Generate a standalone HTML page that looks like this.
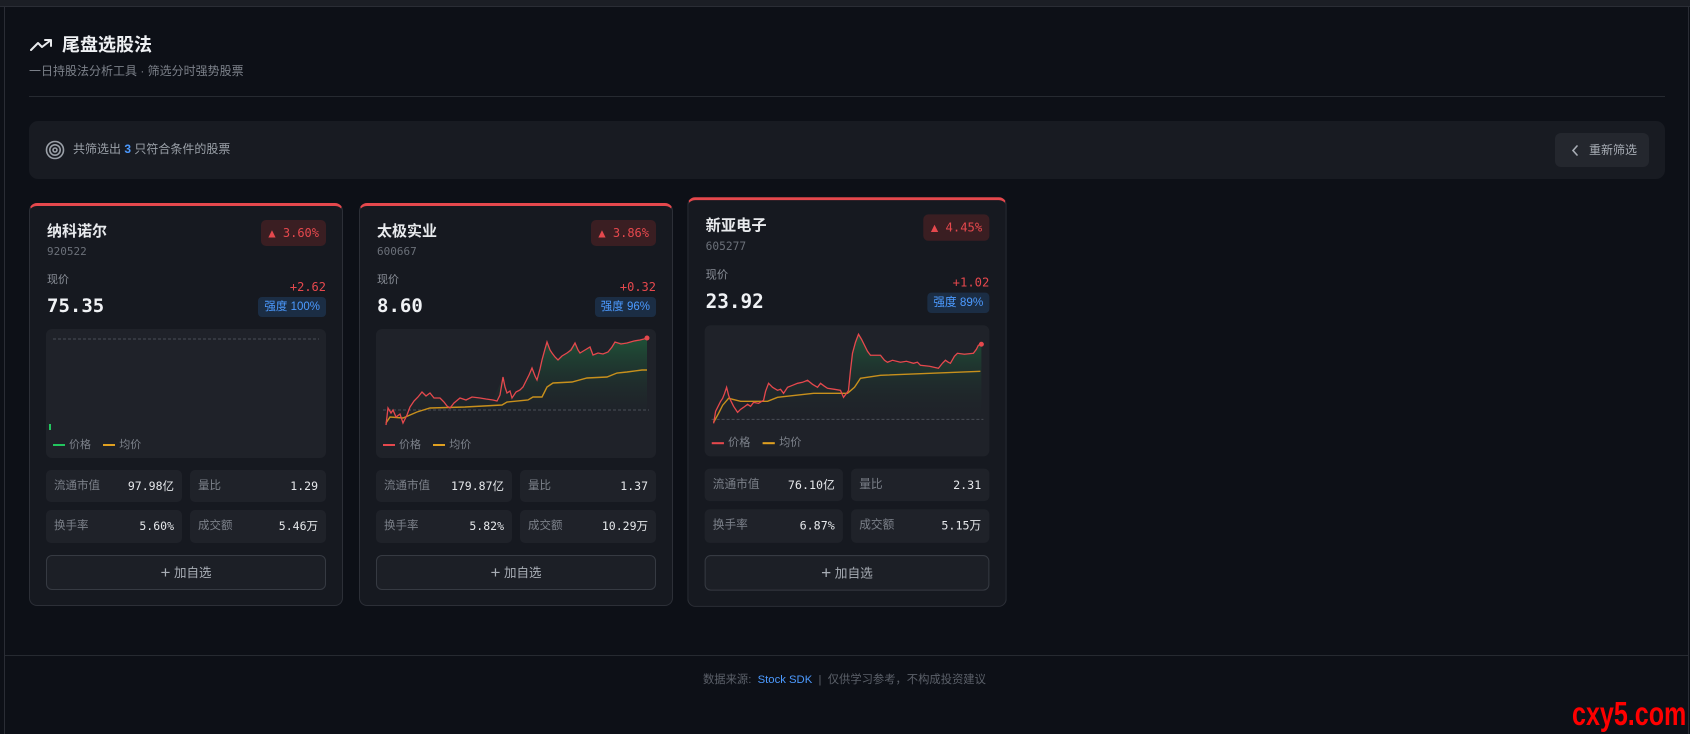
<!DOCTYPE html>
<html><head><meta charset="utf-8"><style>
*{box-sizing:border-box;margin:0;padding:0}
body{width:1690px;height:734px;background:#0d1017;font-family:"Liberation Sans","Noto Sans CJK SC",sans-serif;position:relative;overflow:hidden;color:#e6e8eb}
.abs{position:absolute}
.mono{font-family:"DejaVu Sans Mono","Liberation Mono","Noto Sans CJK SC",monospace}
.card{position:absolute;top:203px;width:314px;height:403px;background:#161920;border:1px solid #2c2f37;border-top:3px solid #e5484d;border-radius:8px}
.card .name{position:absolute;left:17px;top:16px;font-size:15px;font-weight:bold;line-height:20px;color:#e8eaed}
.card .code{position:absolute;left:17px;top:38px;font-size:11px;line-height:16px;color:#6b7079}
.card .badge{position:absolute;right:16px;top:14px;height:26px;padding:0 7px;background:#3a1e22;border-radius:5px;color:#e5484d;font-size:12px;line-height:26px}
.card .lbl{position:absolute;left:17px;top:67px;font-size:11px;line-height:14px;color:#8b9099}
.card .price{position:absolute;left:17px;top:87px;font-size:19px;line-height:26px;font-weight:bold;color:#f0f2f5}
.card .chg{position:absolute;right:16px;top:73px;font-size:12px;line-height:16px;color:#e5484d}
.card .str{position:absolute;right:16px;top:91px;height:20px;padding:0 6px;background:#1b2d44;border-radius:4px;color:#4c9aff;font-size:11.5px;line-height:20px}
.card .chart{position:absolute;left:16px;top:123px;width:280px;height:129px;background:#1f2229;border-radius:6px;overflow:hidden}
.card .leg{position:absolute;left:7px;bottom:6px;font-size:11px;color:#7c818a;line-height:14px}
.leg i{display:inline-block;width:12px;height:2px;vertical-align:middle;margin-right:4px}
.card .st{position:absolute;width:136px;height:32px;background:#1f2229;border-radius:5px;font-size:11.5px;line-height:32px;padding:0 8px;color:#7c818a}
.st b{position:absolute;right:8px;font-weight:normal;color:#e6e8eb}
.card .btn{position:absolute;left:16px;top:349px;width:280px;height:35px;border:1px solid #363a42;background:#1c1f26;border-radius:6px;text-align:center;line-height:33px;font-size:12.5px;color:#a8adb5}
</style></head><body>
<div class="abs" style="left:0;top:0;width:1690px;height:7px;background:#1b1e25;border-bottom:1px solid #2a2d35"></div>
<div class="abs" style="left:4px;top:7px;width:1px;height:727px;background:#2a2d35"></div>
<div class="abs" style="left:1688px;top:7px;width:1px;height:727px;background:#2a2d35"></div>

<svg class="abs" style="left:30px;top:38px" width="23" height="14" viewBox="0 0 23 14"><path d="M1 12 L8 5 L12 9 L21 2 M15 2 H21 V8" fill="none" stroke="#e8eaed" stroke-width="2" stroke-linecap="round" stroke-linejoin="round"/></svg>
<div class="abs" style="left:62px;top:33px;font-size:18px;line-height:24px;font-weight:bold;color:#eef0f3">尾盘选股法</div>
<div class="abs" style="left:29px;top:63px;font-size:12px;line-height:16px;color:#7c818a">一日持股法分析工具 · 筛选分时强势股票</div>
<div class="abs" style="left:29px;top:96px;width:1636px;height:1px;background:#262a31"></div>

<div class="abs" style="left:29px;top:121px;width:1636px;height:58px;background:#181b22;border-radius:9px"></div>
<svg class="abs" style="left:45px;top:140px" width="20" height="20" viewBox="0 0 20 20"><g fill="none" stroke="#9aa0a8" stroke-width="1.6"><circle cx="10" cy="10" r="8.5"/><circle cx="10" cy="10" r="5.2"/><circle cx="10" cy="10" r="2"/></g></svg>
<div class="abs" style="left:73px;top:141px;font-size:12px;line-height:17px;color:#9aa0a8">共筛选出 <span style="color:#4c9aff;font-weight:bold">3</span> 只符合条件的股票</div>
<div class="abs" style="left:1555px;top:133px;width:94px;height:34px;background:#24272e;border-radius:6px;font-size:12px;line-height:34px;color:#a8adb5;padding-left:34px">重新筛选</div>
<svg class="abs" style="left:1571px;top:145px" width="8" height="11" viewBox="0 0 8 11"><path d="M6 1 L2 5.5 L6 10" fill="none" stroke="#a8adb5" stroke-width="1.6" stroke-linecap="round"/></svg>

<!-- card 1 -->
<div class="card" style="left:29px">
<div class="name">纳科诺尔</div><div class="code mono">920522</div>
<div class="badge mono">▲ 3.60%</div>
<div class="lbl">现价</div><div class="price mono">75.35</div>
<div class="chg mono">+2.62</div><div class="str">强度 100%</div>
<div class="chart"><svg width="280" height="129"><line x1="7" y1="10" x2="273" y2="10" stroke="#4a4e56" stroke-dasharray="3,2"/><rect x="3" y="95" width="2" height="6" fill="#22c55e"/></svg>
<div class="leg"><i style="background:#22c55e"></i>价格 &nbsp;&nbsp;&nbsp;<i style="background:#e0a020"></i>均价</div></div>
<div class="st" style="left:16px;top:264px">流通市值<b class="mono">97.98亿</b></div>
<div class="st" style="left:160px;top:264px">量比<b class="mono">1.29</b></div>
<div class="st" style="left:16px;top:304px;height:33px;line-height:33px">换手率<b class="mono">5.60%</b></div>
<div class="st" style="left:160px;top:304px;height:33px;line-height:33px">成交额<b class="mono">5.46万</b></div>
<div class="btn"><span style="font-size:17px;vertical-align:-1px">+</span> 加自选</div>
</div>

<!-- card 2 -->
<div class="card" style="left:359px">
<div class="name">太极实业</div><div class="code mono">600667</div>
<div class="badge mono">▲ 3.86%</div>
<div class="lbl">现价</div><div class="price mono">8.60</div>
<div class="chg mono">+0.32</div><div class="str">强度 96%</div>
<div class="chart"><svg width="280" height="129"><defs><linearGradient id="g1" x1="0" y1="0" x2="0" y2="1"><stop offset="0" stop-color="#1f5a3a" stop-opacity=".85"/><stop offset="1" stop-color="#1f2229" stop-opacity="0"/></linearGradient></defs>
<polygon fill="url(#g1)" points="10,96 12,79 17,83 27,94 34,78 46,63 64,69 74,79 84,69 104,69 117,71 127,48 131,64 136,69 147,58 156,39 161,51 166,31 171,13 176,24 182,31 191,24 199,14 204,24 214,18 217,26 232,23 239,13 251,14 264,11 271,9 271,81 10,81"/>
<line x1="7" y1="81" x2="273" y2="81" stroke="#4a4e56" stroke-dasharray="3,2"/>
<polyline fill="none" stroke="#c8901c" stroke-width="1.4" points="10,94 14,88 27,89 41,83 54,79 89,78 126,76 131,73 152,71 157,68 166,68 171,58 177,54 196,53 211,49 231,48 241,44 251,43 266,41 271,41"/>
<polyline fill="none" stroke="#e5484d" stroke-width="1.3" points="10,96 12,79 15,84 17,81 20,88 24,85 27,94 31,86 34,78 38,72 42,68 46,63 50,67 54,64 58,69 64,69 68,73 71,77 74,79 78,74 84,69 90,71 96,68 104,69 110,70 117,71 121,72 124,66 127,48 129,58 131,64 134,62 136,69 140,63 144,61 147,58 150,52 153,46 156,39 159,47 161,51 164,40 166,31 169,20 171,13 174,21 176,24 179,28 182,31 186,27 191,24 195,21 199,14 202,21 204,24 209,21 214,18 217,26 222,24 227,25 232,23 236,18 239,13 245,15 251,14 258,12 264,11 268,10 271,9"/>
<circle cx="271" cy="9" r="2.5" fill="#e5484d"/></svg>
<div class="leg"><i style="background:#e5484d"></i>价格 &nbsp;&nbsp;&nbsp;<i style="background:#e0a020"></i>均价</div></div>
<div class="st" style="left:16px;top:264px">流通市值<b class="mono">179.87亿</b></div>
<div class="st" style="left:160px;top:264px">量比<b class="mono">1.37</b></div>
<div class="st" style="left:16px;top:304px;height:33px;line-height:33px">换手率<b class="mono">5.82%</b></div>
<div class="st" style="left:160px;top:304px;height:33px;line-height:33px">成交额<b class="mono">10.29万</b></div>
<div class="btn"><span style="font-size:17px;vertical-align:-1px">+</span> 加自选</div>
</div>

<!-- card 3 -->
<div class="card" style="left:690px;transform:translateY(-2.5px) scale(1.017)">
<div class="name">新亚电子</div><div class="code mono">605277</div>
<div class="badge mono">▲ 4.45%</div>
<div class="lbl">现价</div><div class="price mono">23.92</div>
<div class="chg mono">+1.02</div><div class="str">强度 89%</div>
<div class="chart"><svg width="280" height="129" viewBox="0 0 285 131" preserveAspectRatio="none"><defs><linearGradient id="g2" x1="0" y1="0" x2="0" y2="1"><stop offset="0" stop-color="#1f5a3a" stop-opacity=".85"/><stop offset="1" stop-color="#1f2229" stop-opacity="0"/></linearGradient></defs>
<polygon fill="url(#g2)" points="9,98 13,82 18,73 22,62 26,75 33,87 39,82 49,77 59,75 64,58 73,65 79,68 83,62 93,58 103,55 113,62 116,58 123,63 136,65 139,72 144,65 148,28 151,17 154,9 159,18 166,30 176,30 183,37 196,37 209,38 216,40 234,43 241,35 246,38 253,28 269,28 274,20 277,19 277,94 9,94"/>
<line x1="7" y1="94" x2="279" y2="94" stroke="#4a4e56" stroke-dasharray="3,2"/>
<polyline fill="none" stroke="#c8901c" stroke-width="1.4" points="9,97 14,88 18,80 24,73 36,76 63,76 73,72 109,68 143,68 150,62 156,53 176,50 276,46"/>
<polyline fill="none" stroke="#e5484d" stroke-width="1.3" points="9,98 11,86 13,82 16,76 18,73 20,68 22,62 24,70 26,75 29,81 33,87 36,84 39,82 43,79 46,81 49,77 54,78 59,75 61,66 64,58 68,62 73,65 76,64 79,68 83,62 88,60 93,58 98,57 103,55 108,59 113,62 116,58 120,61 123,63 130,64 136,65 139,72 142,68 144,65 146,45 148,28 151,17 154,9 157,14 159,18 163,26 166,30 171,30 176,30 180,35 183,37 188,35 196,37 202,36 209,38 213,37 216,40 225,41 234,43 238,38 241,35 244,37 246,38 250,31 253,28 260,29 269,28 272,24 274,20 277,19"/>
<circle cx="277" cy="19" r="2.5" fill="#e5484d"/></svg>
<div class="leg"><i style="background:#e5484d"></i>价格 &nbsp;&nbsp;&nbsp;<i style="background:#e0a020"></i>均价</div></div>
<div class="st" style="left:16px;top:264px">流通市值<b class="mono">76.10亿</b></div>
<div class="st" style="left:160px;top:264px">量比<b class="mono">2.31</b></div>
<div class="st" style="left:16px;top:304px;height:33px;line-height:33px">换手率<b class="mono">6.87%</b></div>
<div class="st" style="left:160px;top:304px;height:33px;line-height:33px">成交额<b class="mono">5.15万</b></div>
<div class="btn"><span style="font-size:17px;vertical-align:-1px">+</span> 加自选</div>
</div>

<div class="abs" style="left:5px;top:655px;width:1683px;height:1px;background:#262a31"></div>
<div class="abs" style="left:703px;top:672px;font-size:11.3px;line-height:16px;color:#5c616a;white-space:nowrap">数据来源: &nbsp;<span style="color:#4c9aff">Stock SDK</span> &nbsp;| &nbsp;仅供学习参考，不构成投资建议</div>
<div class="abs" style="left:1572px;top:697px;font-weight:bold;font-size:33px;line-height:33px;color:#ff0000;white-space:nowrap;transform:scaleX(0.76);transform-origin:0 0">cxy5.com</div>
</body></html>
